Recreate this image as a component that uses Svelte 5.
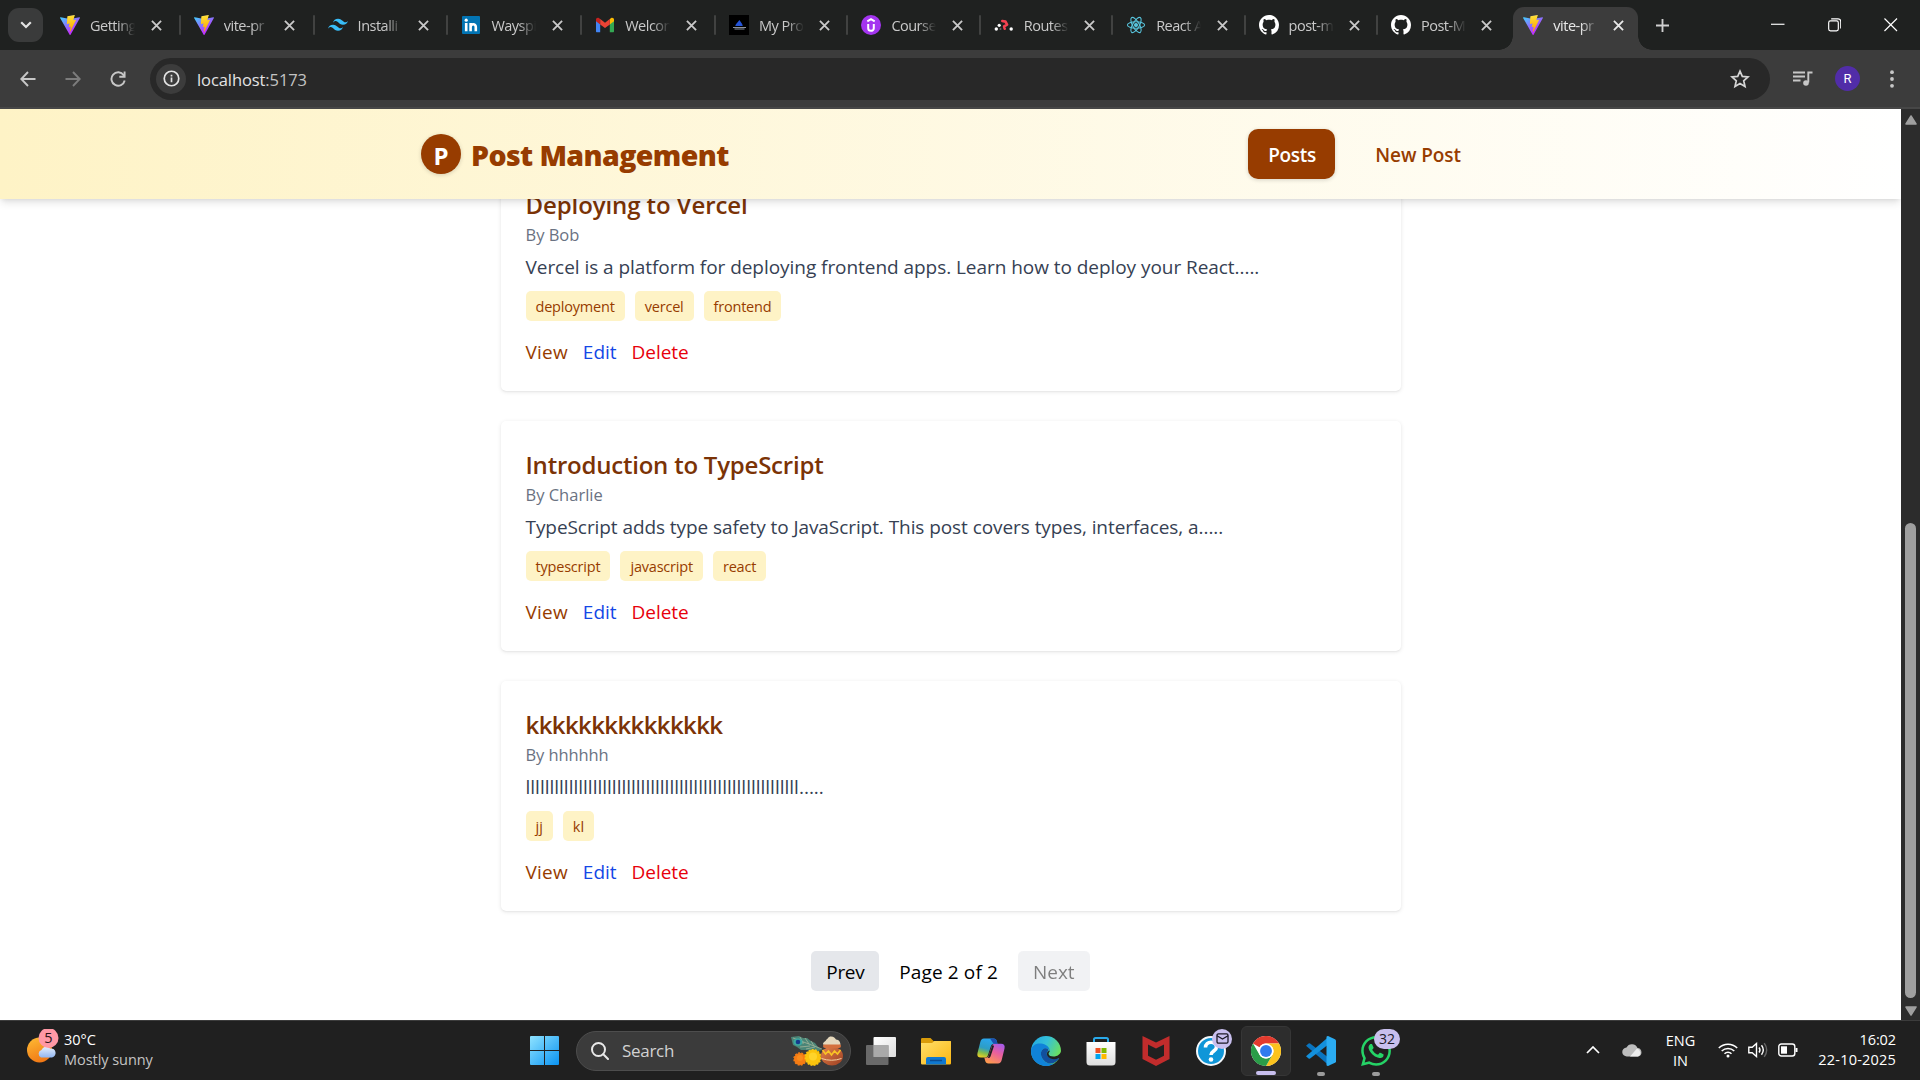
<script>
  const tabs = [
    { icon: 'vite', title: 'Getting' },
    { icon: 'vite', title: 'vite-pr' },
    { icon: 'tailwind', title: 'Installi' },
    { icon: 'linkedin', title: 'Wayspi' },
    { icon: 'gmail', title: 'Welcon' },
    { icon: 'drop', title: 'My Pro' },
    { icon: 'udemy', title: 'Course' },
    { icon: 'router', title: 'Routes' },
    { icon: 'react', title: 'React A' },
    { icon: 'github', title: 'post-m' },
    { icon: 'github', title: 'Post-M' },
    { icon: 'vite', title: 'vite-pr', active: true }
  ];

  const posts = [
    {
      title: 'Deploying to Vercel',
      author: 'Bob',
      body: 'Vercel is a platform for deploying frontend apps. Learn how to deploy your React',
      tags: ['deployment', 'vercel', 'frontend']
    },
    {
      title: 'Introduction to TypeScript',
      author: 'Charlie',
      body: 'TypeScript adds type safety to JavaScript. This post covers types, interfaces, a',
      tags: ['typescript', 'javascript', 'react']
    },
    { title: 'kkkkkkkkkkkkkkk', author: 'hhhhhh', body: 'l'.repeat(57), tags: ['jj', 'kl'] }
  ];

  const apps = ['taskview', 'explorer', 'copilot', 'edge', 'store', 'mcafee', 'help', 'chrome', 'vscode', 'whatsapp'];
</script>

{#snippet icon(name)}
  {#if name === 'vite'}
    <svg class="ic" viewBox="0 0 256 257">
      <path fill="url(#viteA)" d="M255.153 37.938 134.897 252.976c-2.483 4.44-8.862 4.466-11.382.048L.875 37.958c-2.746-4.814 1.371-10.646 6.827-9.67l120.385 21.517a6.537 6.537 0 0 0 2.322-.004l117.867-21.483c5.438-.991 9.574 4.796 6.877 9.62Z" />
      <path fill="url(#viteB)" d="M185.432.063 96.44 17.501a3.268 3.268 0 0 0-2.634 3.014l-5.474 92.456a3.268 3.268 0 0 0 3.997 3.378l24.777-5.718c2.318-.535 4.413 1.507 3.936 3.838l-7.361 36.047c-.495 2.426 1.782 4.5 4.151 3.78l15.304-4.649c2.372-.72 4.652 1.36 4.15 3.788l-11.698 56.621c-.732 3.542 3.979 5.473 5.943 2.437l1.313-2.028 72.516-144.72c1.215-2.423-.88-5.186-3.54-4.672l-25.505 4.922c-2.396.462-4.435-1.77-3.759-4.114l16.646-57.705c.677-2.35-1.37-4.583-3.769-4.113Z" />
    </svg>
  {:else if name === 'tailwind'}
    <svg class="ic" viewBox="0 -10 54 54">
      <path fill="#38bdf8" d="M27 0c-7.2 0-11.7 3.6-13.5 10.8 2.7-3.6 5.85-4.95 9.45-4.05 2.054.513 3.522 2.004 5.147 3.653C30.744 13.09 33.808 16.2 40.5 16.2c7.2 0 11.7-3.6 13.5-10.8-2.7 3.6-5.85 4.95-9.45 4.05-2.054-.513-3.522-2.004-5.147-3.653C36.756 3.11 33.692 0 27 0zM13.5 16.2C6.3 16.2 1.8 19.8 0 27c2.7-3.6 5.85-4.95 9.45-4.05 2.054.514 3.522 2.004 5.147 3.653C17.244 29.29 20.308 32.4 27 32.4c7.2 0 11.7-3.6 13.5-10.8-2.7 3.6-5.85 4.95-9.45 4.05-2.054-.513-3.522-2.004-5.147-3.653C23.256 19.31 20.192 16.2 13.5 16.2z" />
    </svg>
  {:else if name === 'linkedin'}
    <svg class="ic" viewBox="0 0 20 20">
      <rect x="1" y="1" width="18" height="18" rx="1" fill="#0274b3" />
      <circle cx="5.2" cy="5.2" r="1.6" fill="#fff" />
      <path d="M5.2 8v8.2M9.6 8v8.2M9.6 12c0-3.4 5.2-3.8 5.2 0v4.2" fill="none" stroke="#fff" stroke-width="2.6" />
    </svg>
  {:else if name === 'gmail'}
    <svg class="ic" viewBox="0 0 20 20">
      <path d="M1 5v11.2c0 .6.4 1 1 1h3.2V8.4z" fill="#4285f4" />
      <path d="M19 5v11.2c0 .6-.4 1-1 1h-3.2V8.4z" fill="#34a853" />
      <path d="M14.8 4.1v5.3L19 6.3V4.6c0-1.6-1.8-2.5-3.1-1.4z" fill="#fbbc04" />
      <path d="M1 4.6v1.7l4.2 3.1V4.1L4.1 3.2C2.8 2.1 1 3 1 4.6z" fill="#c5221f" />
      <path d="M5.2 4.1v5.3l4.8 3.6 4.8-3.6V4.1L10 7.7z" fill="#ea4335" />
    </svg>
  {:else if name === 'drop'}
    <svg class="ic" viewBox="0 0 20 20">
      <rect width="20" height="20" fill="#000" />
      <path d="M10.4 5c2 3 3.3 4 3.3 6H6.3c0-2 2-3 4.1-6z" fill="#2454d8" />
      <path d="M4 12.5h13M5.5 14h10" stroke="#8a919c" stroke-width="1" />
    </svg>
  {:else if name === 'udemy'}
    <svg class="ic" viewBox="0 0 20 20">
      <circle cx="10" cy="10" r="10" fill="#a435f0" />
      <path d="M6.3 6.3 10 4.2l3.7 2.1M7.2 9v4.2c0 3.4 5.6 3.4 5.6 0V9" fill="none" stroke="#fff" stroke-width="2" />
    </svg>
  {:else if name === 'router'}
    <svg class="ic" viewBox="0 0 20 20">
      <path d="M8.300 6l3.200.6 1.600 3-3 1.800.6 2.400" fill="none" stroke="#f44250" stroke-width="2.600" stroke-linecap="round" stroke-linejoin="round" />
      <g fill="#fff"><circle cx="5.2" cy="10.300" r="1.600" /><circle cx="2.3" cy="14" r="1.700" /><circle cx="17.2" cy="14" r="1.700" /></g>
      <circle cx="6.500" cy="14" r="1" fill="#fff" opacity="0.300" />
    </svg>
  {:else if name === 'react'}
    <svg class="ic" viewBox="0 0 20 20" fill="none" stroke="#58c4dc" stroke-width="1.1">
      <circle cx="10" cy="10" r="1.5" fill="#58c4dc" />
      <ellipse cx="10" cy="10" rx="8.6" ry="3.3" />
      <ellipse cx="10" cy="10" rx="8.6" ry="3.3" transform="rotate(60 10 10)" />
      <ellipse cx="10" cy="10" rx="8.6" ry="3.3" transform="rotate(120 10 10)" />
    </svg>
  {:else if name === 'github'}
    <svg class="ic" viewBox="0 0 16 16">
      <path fill="#fff" d="M8 0C3.58 0 0 3.58 0 8c0 3.54 2.29 6.53 5.47 7.59.4.07.55-.17.55-.38 0-.19-.01-.82-.01-1.49-2.01.37-2.53-.49-2.69-.94-.09-.23-.48-.94-.82-1.13-.28-.15-.68-.52-.01-.53.63-.01 1.08.58 1.23.82.72 1.21 1.87.87 2.33.66.07-.52.28-.87.51-1.07-1.78-.2-3.64-.89-3.64-3.95 0-.87.31-1.59.82-2.15-.08-.2-.36-1.02.08-2.12 0 0 .67-.21 2.2.82.64-.18 1.32-.27 2-.27s1.36.09 2 .27c1.53-1.04 2.2-.82 2.2-.82.44 1.1.16 1.92.08 2.12.51.56.82 1.27.82 2.15 0 3.07-1.87 3.75-3.65 3.95.29.25.54.73.54 1.48 0 1.07-.01 1.93-.01 2.2 0 .21.15.46.55.38A8.01 8.01 0 0 0 16 8c0-4.42-3.58-8-8-8z" />
    </svg>
  {/if}
{/snippet}

{#snippet app(name)}
  {#if name === 'taskview'}
    <svg viewBox="0 0 30 30" class="app">
      <rect x="7.5" y="1" width="22.5" height="20" rx="1" fill="url(#tvA)" />
      <rect x="0" y="9" width="22.5" height="20" rx="1" fill="#777" opacity=".85" />
      <rect x="7.5" y="9" width="15" height="12" fill="#a9a9a9" />
    </svg>
  {:else if name === 'explorer'}
    <svg viewBox="0 0 30 30" class="app">
      <path d="M0 3.2Q0 2 1.2 2h8.3l3 3H30v9H0z" fill="#d99b0a" />
      <path d="M0 7h11l2.5-2H29q1 0 1 1v21.2Q30 28.5 28.8 28.5H1.2Q0 28.5 0 27.2z" fill="url(#folder)" />
      <path d="M5 28.5V23q0-2 2-2h16q2 0 2 2v5.5z" fill="#0f78d0" />
      <path d="M9 24.5h12" stroke="#0b4c93" stroke-width="1.5" />
    </svg>
  {:else if name === 'copilot'}
    <svg viewBox="0 0 30 30" class="app">
      <path d="M8 2.5h9.500c2 0 2.800 1 3.300 2.800l.7 2.400h-3.200c-2 0-3 .9-3.600 3L12 19c-.6 2-1.500 2.600-3.400 2.600H5c-3 0-4.200-1.500-3.500-4.500L4.300 6c.6-2.300 1.600-3.500 3.700-3.500z" fill="url(#copA)" />
      <path d="M22 27.500h-9.500c-2 0-2.800-1-3.300-2.800l-.9-3.100c3 .2 4-.6 4.700-2.600L15.500 11c.7-2.300 1.500-3.300 3.600-3.300H25c3 0 4.200 1.800 3.500 4.800L25.700 24c-.6 2.300-1.600 3.500-3.700 3.500z" fill="url(#copB)" />
      <path d="M14 2.500h3.500c2 0 2.800 1 3.300 2.800l.7 2.400h-4z" fill="#1c4fb0" />
      <path d="M13.200 18.500 15.700 11q.4-1.300 1-2l1.300 1-3.500 10.500q-.8 2-3 1.500 1.200-1 1.700-3.500z" fill="#202020" />
    </svg>
  {:else if name === 'edge'}
    <svg viewBox="0 0 30 30" class="app">
      <circle cx="15" cy="15" r="15" fill="url(#edgeA)" />
      <path d="M0 15C.3 9.500 5 7 10 7.500c4.600.5 8.500 3.300 8.800 7-1.500-2.300-5-3-7.200-1-3.400 3-1.600 10.500 5 13.500 2.500 1.200 5 .8 7 .3A15 15 0 0 1 0 15z" fill="#1083d9" />
      <path d="M11.600 13.500c-3.400 3-1.600 10.500 5 13.500 4 1.700 8.800-.6 11.400-4.500.5-.8-.2-1.200-1-.8-4.500 2-9.500.3-11-2.700-.8-2 .2-3.400 1.600-4.500 0-2.500-4-3-6-1z" fill="#124f9e" />
      <path d="M18.800 14.500c.2 1.500-1.400 2-1.200 3.500.2 2 3.300 2.900 6.300 2.400 3.600-.6 6.100-3 6.100-5.400l1 4q-1 4-3.500 3c-4 2.500-9.500.5-11-2-1.500-2.300-.4-4.600 2.300-5.500z" fill="#202020" />
    </svg>
  {:else if name === 'store'}
    <svg viewBox="0 0 30 30" class="app">
      <path d="M8 6V3.500Q8 2 9.500 2h11Q22 2 22 3.500V6" fill="none" stroke="#29a9ea" stroke-width="2" />
      <path d="M.5 6h29v20q0 3.500-3.500 3.500H4Q.5 29.500.5 26z" fill="url(#storeA)" />
      <path d="M9.500 12h5v5h-5z" fill="#f25022" /><path d="M15.500 12h5v5h-5z" fill="#7fba00" />
      <path d="M9.500 18h5v5h-5z" fill="#00a4ef" /><path d="M15.500 18h5v5h-5z" fill="#ffb900" />
    </svg>
  {:else if name === 'mcafee'}
    <svg viewBox="0 0 30 30" class="app">
      <path d="M1.500 0 15 6.500 28.500 0v23L15 30 1.500 23z M7 8.500v11.200l8 4.100 8-4.100V8.500l-8 4z" fill="#c12c2c" fill-rule="evenodd" />
    </svg>
  {:else if name === 'help'}
    <svg viewBox="0 0 30 30" class="app">
      <circle cx="15" cy="15" r="14" fill="#0f96d8" stroke="#f4f8fb" stroke-width="2" />
      <path d="M9.500 11.500c0-7 11-7 11-.5 0 4-5.500 4-5.500 8" fill="none" stroke="#fff" stroke-width="3.600" />
      <circle cx="15" cy="23.500" r="2.300" fill="#fff" />
    </svg>
  {:else if name === 'chrome'}
    <svg viewBox="0 0 48 48" class="app">
      <circle cx="24" cy="24" r="24" fill="#fff" />
      <path d="M3.200 12A24 24 0 0 1 44.800 12H24a12 12 0 0 0-10.400 6z" fill="#e33b2e" />
      <path d="M44.800 12A24 24 0 0 1 24 48l10.400-18A12 12 0 0 0 34.400 18L24 12z" fill="#fcc31e" />
      <path d="M3.200 12A24 24 0 0 0 24 48l10.400-18A12 12 0 0 1 13.600 30z" fill="#2a9d48" />
      <circle cx="24" cy="24" r="12" fill="#fff" /><circle cx="24" cy="24" r="9.500" fill="#2f7bee" />
    </svg>
  {:else if name === 'vscode'}
    <svg viewBox="0 0 30 30" class="app">
      <path d="M0 9.800 2.600 7.500q.7-.5 1.500 0L23 22v7.500z" fill="#0a74bf" />
      <path d="M0 20.300l2.600 2.300q.7.500 1.500 0L23 8V.5z" fill="#1390dc" />
      <path d="M22 0l7 3.200q1 .5 1 1.500v20.600q0 1-1 1.500L22 30q-1.500 0-1.500-1V1q0-1 1.500-1z" fill="#2bacf2" />
    </svg>
  {:else if name === 'whatsapp'}
    <svg viewBox="0 0 24 24" class="app">
      <path fill="#25d366" d="M17.472 14.382c-.297-.149-1.758-.867-2.030-.967-.273-.099-.471-.148-.67.15-.197.297-.767.966-.94 1.164-.173.199-.347.223-.644.075-.297-.15-1.255-.463-2.390-1.475-.883-.788-1.480-1.761-1.653-2.059-.173-.297-.018-.458.13-.606.134-.133.298-.347.446-.52.149-.174.198-.298.298-.497.099-.198.05-.371-.025-.52-.075-.149-.669-1.612-.916-2.207-.242-.579-.487-.5-.669-.51-.173-.008-.371-.01-.57-.01-.198 0-.52.074-.792.372-.272.297-1.040 1.016-1.040 2.479 0 1.462 1.065 2.875 1.213 3.074.149.198 2.096 3.200 5.077 4.487.709.306 1.262.489 1.694.625.712.227 1.360.195 1.871.118.571-.085 1.758-.719 2.006-1.413.248-.694.248-1.289.173-1.413-.074-.124-.272-.198-.57-.347m-5.421 7.403h-.004a9.870 9.870 0 01-5.031-1.378l-.361-.214-3.741.982.998-3.648-.235-.374a9.860 9.860 0 01-1.510-5.260c.001-5.450 4.436-9.884 9.888-9.884 2.640 0 5.122 1.030 6.988 2.898a9.825 9.825 0 012.893 6.994c-.003 5.450-4.437 9.884-9.885 9.884m8.413-18.297A11.815 11.815 0 0012.050 0C5.495 0 .16 5.335.157 11.892c0 2.096.547 4.142 1.588 5.945L.057 24l6.305-1.654a11.882 11.882 0 005.683 1.448h.005c6.554 0 11.890-5.335 11.893-11.893a11.821 11.821 0 00-3.480-8.413z" />
    </svg>
  {/if}
{/snippet}

<svg class="defs" width="0" height="0">
  <defs>
    <linearGradient id="viteA" x1="0" y1="0" x2=".58" y2=".8"><stop offset="0" stop-color="#41d1ff" /><stop offset="1" stop-color="#bd34fe" /></linearGradient>
    <linearGradient id="viteB" x1=".43" y1="0" x2=".5" y2=".9"><stop offset="0" stop-color="#ffea83" /><stop offset=".1" stop-color="#ffdd35" /><stop offset="1" stop-color="#ffa800" /></linearGradient>
    <linearGradient id="tvA" x1="0" y1="0" x2="1" y2="1"><stop offset="0" stop-color="#fff" /><stop offset="1" stop-color="#ddd" /></linearGradient>
    <linearGradient id="folder" x1="0" y1="0" x2="1" y2="1"><stop offset="0" stop-color="#ffdf6a" /><stop offset="1" stop-color="#fbb713" /></linearGradient>
    <linearGradient id="copA" x1=".5" y1="0" x2=".2" y2="1"><stop offset="0" stop-color="#2aa6ef" /><stop offset=".5" stop-color="#2d9dc4" /><stop offset=".75" stop-color="#82bd4c" /><stop offset="1" stop-color="#f2cf22" /></linearGradient>
    <linearGradient id="copB" x1=".8" y1="0" x2=".3" y2="1"><stop offset="0" stop-color="#a65bea" /><stop offset=".45" stop-color="#e95f9e" /><stop offset="1" stop-color="#ff9a4e" /></linearGradient>
    <linearGradient id="edgeA" x1="0" y1="0" x2="1" y2=".5"><stop offset="0" stop-color="#1fa5e5" /><stop offset=".5" stop-color="#35c1d8" /><stop offset="1" stop-color="#6de05a" /></linearGradient>
    <linearGradient id="storeA" x1="0" y1="0" x2="0" y2="1"><stop offset="0" stop-color="#fff" /><stop offset="1" stop-color="#dedede" /></linearGradient>
    <linearGradient id="winA" x1="0" y1="0" x2="1" y2="1"><stop offset="0" stop-color="#8fe3ff" /><stop offset="1" stop-color="#0a93f2" /></linearGradient>
    <linearGradient id="sun" x1=".2" y1="0" x2=".6" y2="1"><stop offset="0" stop-color="#fdb833" /><stop offset="1" stop-color="#f07614" /></linearGradient>
    <linearGradient id="cloudA" x1="0" y1="0" x2="0" y2="1"><stop offset="0" stop-color="#e6effc" /><stop offset="1" stop-color="#92b6f0" /></linearGradient>
    <linearGradient id="pot" x1="0" y1="0" x2="1" y2="1"><stop offset="0" stop-color="#e5824a" /><stop offset="1" stop-color="#9c3f22" /></linearGradient>
  </defs>
</svg>

<div class="screen">
  <div class="tabstrip">
    <button class="tabsearch" aria-label="Search tabs">
      <svg width="12" height="8" viewBox="0 0 12 8"><path d="M1.200 1.200 6 6l4.800-4.800" fill="none" stroke="#e3e3e3" stroke-width="2.200" /></svg>
    </button>
    <div class="tabs">
      {#each tabs as tab, i}
        <div class="tab" class:wide={i < 5} class:active={tab.active} class:nosep={i >= 10}>
          {@render icon(tab.icon)}
          <span class="tabtitle">{tab.title}</span>
          <svg class="x" viewBox="0 0 12 12"><path d="M1 1l10 10M11 1 1 11" stroke="currentColor" stroke-width="2" /></svg>
        </div>
      {/each}
    </div>
    <svg class="plus" viewBox="0 0 14 14"><path d="M7 0v14M0 7h14" stroke="#d0d0d0" stroke-width="2" /></svg>
    <div class="winctl">
      <svg viewBox="0 0 14 14"><path d="M0 6.500h14" stroke="#fff" stroke-width="1.200" /></svg>
      <svg viewBox="0 0 14 14" fill="none" stroke="#fff" stroke-width="1.200"><rect x=".7" y="3" width="10" height="10.300" rx="1.800" /><path d="M3.300.9h7.200q2.700 0 2.700 2.700v7.400" /></svg>
      <svg viewBox="0 0 14 14"><path d="M.5.5l13 13M13.500.5l-13 13" stroke="#fff" stroke-width="1.200" /></svg>
    </div>
  </div>

  <div class="toolbar">
    <div class="nav">
      <svg viewBox="0 0 16 16" fill="none" stroke="#c7c7c7" stroke-width="1.900"><path d="M15.500 8H1.500M8 1 1.300 8 8 15" /></svg>
      <svg viewBox="0 0 16 16" fill="none" stroke="#7c7c7c" stroke-width="1.900"><path d="M.5 8h14M8 1l6.700 7L8 15" /></svg>
      <svg viewBox="0 0 16 16" fill="none" stroke="#c7c7c7" stroke-width="1.900"><path d="M13.700 4.200A6.700 6.700 0 1 0 14.700 9.500M14.600.5v5.300H9.300" /></svg>
    </div>
    <div class="omnibox">
      <span class="info"><svg viewBox="0 0 18 18" fill="none" stroke="#e3e3e3" stroke-width="1.800"><circle cx="9" cy="9" r="7.700" /><path d="M9 8v5M9 5v1.800" /></svg></span>
      <span class="url">localhost<span class="port">:5173</span></span>
      <svg class="star" viewBox="0 0 20 20" fill="none" stroke="#d5d5d5" stroke-width="1.700"><path d="M10 2.200l2.300 5.200 5.700.6-4.300 3.800 1.300 5.600-5-3-5 3 1.300-5.600L2 8l5.700-.6z" /></svg>
    </div>
    <svg class="queue" viewBox="0 0 20 16" fill="none" stroke="#c7c7c7" stroke-width="1.900"><path d="M0 1.500h12M0 5.500h12M0 9.500h7.500M15.300 11.500V1.500H19.500" /><circle cx="13" cy="12" r="2.800" fill="#c7c7c7" stroke="none" /></svg>
    <span class="avatar">R</span>
    <svg class="dots" viewBox="0 0 4 18" fill="#c7c7c7"><circle cx="2" cy="2.200" r="1.900" /><circle cx="2" cy="9" r="1.900" /><circle cx="2" cy="15.800" r="1.900" /></svg>
  </div>

  <div class="viewport">
    <div class="page">
      <header>
        <div class="brand"><span class="mark">P</span><span class="name">Post Management</span></div>
        <nav><a class="on" href="#posts">Posts</a><a href="#new">New Post</a></nav>
      </header>
      <main>
        {#each posts as post, i}
          <article class="post-{i + 1}">
            <h2>{post.title}</h2>
            <p class="by">By {post.author}</p>
            <p class="body">{post.body}.....</p>
            <div class="tags">{#each post.tags as t}<span>{t}</span>{/each}</div>
            <div class="links"><a class="view" href="#view">View</a><a class="edit" href="#edit">Edit</a><a class="delete" href="#delete">Delete</a></div>
          </article>
        {/each}
        <div class="pager"><button class="prev">Prev</button><span>Page 2 of 2</span><button disabled>Next</button></div>
      </main>
    </div>
    <div class="scrollbar">
      <svg viewBox="0 0 12 10"><path d="M6 1 11 9H1z" fill="#9f9f9f" stroke="#9f9f9f" stroke-width="1.500" stroke-linejoin="round" /></svg>
      <div class="thumb"></div>
      <svg viewBox="0 0 12 10"><path d="M6 9 11 1H1z" fill="#9f9f9f" stroke="#9f9f9f" stroke-width="1.500" stroke-linejoin="round" /></svg>
    </div>
  </div>

  <div class="taskbar">
    <div class="weather">
      <svg viewBox="0 0 32 34" width="32" height="34">
        <circle cx="12.500" cy="21" r="12.500" fill="url(#sun)" />
        <path d="M14 28.500a4 4 0 0 1 .5-7.500 5 5 0 0 1 8.500-1.500 4.500 4.500 0 0 1 2 9z" fill="url(#cloudA)" />
        <circle cx="21.500" cy="9" r="10" fill="#ff98a5" />
      </svg>
      <span class="wbadge">5</span>
      <div class="wtext"><span>30°C</span><span class="dim">Mostly sunny</span></div>
    </div>
    <svg class="start" viewBox="0 0 29 29"><path fill="url(#winA)" d="M1 0h13v14H0V1q0-1 1-1zM15 0h13q1 0 1 1v13H15zM0 15h14v14H1q-1 0-1-1zM15 15h14v13q0 1-1 1H15z" /></svg>
    <div class="search">
      <svg class="mag" viewBox="0 0 18 18" fill="none" stroke="#e8e8e8" stroke-width="2"><circle cx="7.500" cy="7.500" r="6.500" /><path d="M12.300 12.300 17 17" stroke-linecap="round" /></svg>
      <span>Search</span>
      <svg class="deco" viewBox="0 0 53 30">
        <path d="M0 1 8 0l4 2 4 0 4 3 4 2 3 4 4 3-4 1-5 0-6-1-6 0-4-3-4-2z" fill="#4b8577" />
        <path d="M2 2 31 13M9 1l3 6M14 2l4 6M20 5l3 5M4 7l9 0M9 11l10-1M15 13l9-2" stroke="#a3b59a" stroke-width=".8" fill="none" />
        <ellipse cx="7" cy="6" rx="4.500" ry="3.800" fill="#3aa7a0" /><circle cx="7" cy="6" r="2.300" fill="#143a8c" />
        <circle cx="9" cy="23" r="6" fill="#f57c14" stroke="#f57c14" stroke-width="1.500" stroke-dasharray="2 1.200" /><circle cx="9" cy="22" r="3" fill="#fb8c1c" />
        <circle cx="22" cy="21.500" r="7.800" fill="#fbc40d" stroke="#fbc40d" stroke-width="1.500" stroke-dasharray="2 1.200" /><circle cx="22" cy="20.500" r="4" fill="#ffd42a" />
        <ellipse cx="41" cy="20" rx="11" ry="9.500" fill="url(#pot)" />
        <rect x="32" y="8" width="18" height="4" rx="2" fill="#d5703d" />
        <path d="M31.500 14l3 4 3-3 3 4 3-4 3 3 3-4" fill="none" stroke="#f9c425" stroke-width="1.600" />
        <path d="M30.500 22.500q10 3.500 20 0" fill="none" stroke="#f3cfa2" stroke-width="1" />
        <path d="M32 8.500c0-3 3-3 3-4.500 2-1 2-3.500 5-3.500s4 1.500 5 3c3 0 4.500 3 4.500 5z" fill="#e6d8bd" />
      </svg>
    </div>
    <div class="apps">
      {#each apps as name}
        <div class="slot" class:current={name === 'chrome'} class:running={name === 'vscode' || name === 'whatsapp'}>
          {@render app(name)}
          {#if name === 'help'}<span class="badge mail"><svg viewBox="0 0 14 12" fill="none" stroke="#1c1a26" stroke-width="1.400"><rect x="1" y="1" width="12" height="10" rx="1.500" /><path d="M1 3l6 3.500L13 3" /></svg></span>{/if}
          {#if name === 'whatsapp'}<span class="badge count">32</span>{/if}
        </div>
      {/each}
    </div>
    <div class="tray">
      <svg class="chev" viewBox="0 0 14 8"><path d="M1 7l6-6 6 6" fill="none" stroke="#fff" stroke-width="1.700" /></svg>
      <svg class="cloud" viewBox="0 0 20 14"><path d="M5 13.500a4.500 4.500 0 0 1-.5-9A6 6 0 0 1 15.500 5a4.300 4.300 0 0 1 .5 8.500z" fill="#bdbdbd" /><path d="M8 13.500 15 5.500a4.300 4.300 0 0 1 1 8z" fill="#ededed" /></svg>
      <div class="lang"><span>ENG</span><span>IN</span></div>
      <svg class="wifi" viewBox="0 0 20 16" fill="none" stroke="#fff" stroke-width="1.500"><path d="M.8 6a13 13 0 0 1 18.400 0M3.700 9a9 9 0 0 1 12.600 0M6.500 11.800a5 5 0 0 1 7 0" /><circle cx="10" cy="14" r="1.500" fill="#fff" stroke="none" /></svg>
      <svg class="vol" viewBox="0 0 20 16" fill="none" stroke="#fff" stroke-width="1.400"><path d="M.8 5.300h3.400L8.500 1.500v13L4.200 10.700H.8z" /><path d="M11 5.500q2 2.500 0 5M13.500 3.300q3.600 4.700 0 9.400" /><path d="M16.200 1.200q5 6.800 0 13.600" stroke="#666" /></svg>
      <svg class="bat" viewBox="0 0 20 14" fill="none" stroke="#fff" stroke-width="1.400"><rect x=".8" y="1" width="16" height="12" rx="2.500" /><path d="M18.500 5v4" stroke-width="2" /><rect x="3" y="3.300" width="6" height="7.400" fill="#fff" stroke="none" /></svg>
      <div class="clock"><span>16:02</span><span class="date">22-10-2025</span></div>
    </div>
  </div>
</div>

<style>
  :global(body) { margin: 0; overflow: hidden; }
  .defs { position: absolute; }
  .screen {
    width: 1920px; height: 1080px; display: flex; flex-direction: column; overflow: hidden;
    font-family: 'Open Sans', 'Noto Sans', sans-serif; background: #fff;
  }
  .screen * { box-sizing: border-box; }
  svg { display: block; flex: none; }
  button { border: 0; font: inherit; padding: 0; }
  a { text-decoration: none; }

  .tabstrip { height: 50px; background: #1f2120; display: flex; align-items: center; padding-left: 8px; flex: none; }
  .tabsearch { width: 35px; height: 34px; border-radius: 11px; background: #3a3b3b; display: grid; place-items: center; }
  .tabs { display: flex; align-self: stretch; margin-left: 4px; }
  .tab {
    position: relative; width: 132.400px; display: flex; align-items: center; padding-left: 13px; color: #c9c9c9;
  }
  .tab.wide { width: 133.800px; }
  .tab:not(.nosep)::after { content: ''; margin-left: auto; width: 2px; height: 20px; background: #414241; border-radius: 1px; }
  .ic { width: 20px; height: 20px; }
  .tabtitle {
    width: 46px; margin-left: 10px; font-size: 14.500px; line-height: 22px; padding-top: 1px; letter-spacing: -0.5px; white-space: nowrap; overflow: hidden;
    mask-image: linear-gradient(90deg, #000 60%, transparent 98%);
  }
  .x { width: 11px; height: 11px; margin-left: 14.500px; }
  .tab.active { color: #e8e8e8; width: 125px; margin: 7px 0 0 3px; padding: 0 0 7px 10px; background: #3c3c3c; border-radius: 11px 11px 0 0; }
  .tab.active .x { margin-left: 13.500px; }
  .tab.active::before {
    content: ''; position: absolute; bottom: 0; left: -14px; right: -14px; height: 14px;
    background: radial-gradient(circle at 0 0, transparent 13.500px, #3c3c3c 14px) left / 14px 14px no-repeat,
      radial-gradient(circle at 100% 0, transparent 13.500px, #3c3c3c 14px) right / 14px 14px no-repeat;
  }
  .plus { width: 13px; height: 13px; margin-left: 18px; }
  .winctl { margin-left: auto; display: flex; gap: 43px; padding-right: 22.500px; }
  .winctl svg { width: 13.500px; height: 13.500px; }

  .toolbar {
    height: 59px; flex: none; display: flex; align-items: center; padding: 0 26px 0 20px; background: #3c3c3c;
    border-bottom: 2px solid #474747;
  }
  .nav { display: flex; gap: 29px; }
  .nav svg { width: 16px; height: 16px; }
  .omnibox { margin-left: 24px; width: 1620px; height: 42px; border-radius: 21px; background: #282828; display: flex; align-items: center; padding: 0 20px 0 6px; }
  .info { width: 30px; height: 30px; border-radius: 50%; background: #3c3c3c; display: grid; place-items: center; }
  .info svg { width: 17px; height: 17px; }
  .url { margin-left: 11px; font-size: 16.500px; letter-spacing: -0.09px; color: #e3e3e3; padding-top: 1px; }
  .port { color: #c3c3c3; }
  .star { width: 20px; height: 20px; margin-left: auto; }
  .queue { width: 20px; height: 16px; margin-left: 23px; }
  .avatar { width: 25px; height: 25px; border-radius: 50%; background: #512da8; color: #fff; font: 13px/25px Roboto, sans-serif; text-align: center; margin-left: 22px; }
  .dots { width: 4px; height: 18px; margin-left: auto; }

  .viewport { flex: 1; display: flex; min-height: 0; }
  .page { width: 1901px; display: flex; flex-direction: column; overflow: hidden; }
  header {
    height: 90px; flex: none; display: flex; align-items: center; justify-content: space-between; padding: 0 420px 0 421px; z-index: 1;
    background: linear-gradient(90deg, #fef3c6, #fff); box-shadow: 0 5px 8px -1px #0000001a, 0 2px 5px -2px #0000001a;
  }
  .brand { display: flex; align-items: center; gap: 10px; color: #973c00; }
  .mark { width: 40px; height: 40px; border-radius: 50%; background: #973c00; color: #fff; font-weight: 700; font-size: 24px; line-height: 43px; text-align: center; box-shadow: 0 1px 4px #0000002a; }
  .name { font-size: 28.500px; font-weight: 800; letter-spacing: -0.6px; white-space: nowrap; padding-top: 2px; }
  nav { display: flex; gap: 20px; }
  nav a { height: 50px; padding: 0 20px; line-height: 53px; font-size: 19px; font-weight: 600; color: #973c00; border-radius: 10px; letter-spacing: -0.06px; }
  nav a.on { width: 87px; background: #973c00; color: #fff; box-shadow: 0 1px 4px #0000002a; letter-spacing: -0.3px; }
  main { width: 900px; margin: -38px auto 0; }
  article {
    height: 230px; padding: 26px 25px 24px; margin-bottom: 30px; border-radius: 5px; background: #fff;
    box-shadow: 0 1px 4px #0000001a, 0 1px 2px -1px #0000001a;
  }
  h2, p { margin: 0; }
  h2 { font-size: 24px; line-height: 35px; font-weight: 600; color: #7b3306; letter-spacing: -0.1px; }
  .by { font-size: 16.500px; line-height: 25px; color: #6a7282; }
  .body { font-size: 19px; line-height: 30px; margin-top: 5px; color: #364153; white-space: nowrap; letter-spacing: -0.05px; }
  .post-2 h2 { letter-spacing: -0.22px; }
  .post-2 .body { letter-spacing: -0.07px; }
  .post-3 h2 { letter-spacing: -0.62px; }
  .post-3 .by { letter-spacing: -0.1px; }
  .post-3 .body { letter-spacing: 0; }
  .tags { display: flex; gap: 10px; margin-top: 9px; }
  .tags span { height: 30px; padding: 0 10px; line-height: 31px; font-size: 14.500px; letter-spacing: -0.2px; border-radius: 5px; background: #fef3c6; color: #973c00; }
  .post-3 .tags span { letter-spacing: 0; }
  .links { display: flex; gap: 15px; margin-top: 16px; font-size: 19px; line-height: 30px; }
  .view { color: #973c00; letter-spacing: 0.2px; } .edit { color: #1447e6; } .delete { color: #e7000b; letter-spacing: -0.06px; }
  .pager { display: flex; justify-content: center; align-items: center; gap: 20px; margin-top: 40px; font-size: 19px; line-height: 28px; color: #000; letter-spacing: 0.12px; }
  .pager span { padding-top: 2px; }
  .pager button { height: 40px; padding: 2px 15px 0; background: #e5e7eb; border-radius: 5px; color: #000; }
  .pager .prev { letter-spacing: -0.35px; }
  .pager button:disabled { opacity: 0.5; }
  .scrollbar { width: 19px; background: #2c2c2c; display: flex; flex-direction: column; align-items: center; padding: 6px 0 4px; }
  .scrollbar svg { width: 12px; height: 10px; }
  .thumb { width: 11px; height: 475px; margin-top: auto; margin-bottom: 8px; border-radius: 6px; background: #9f9f9f; }

  .taskbar { height: 60px; flex: none; background: #202020; border-top: 1px solid #3c3c3c; display: flex; align-items: center; color: #fff; font-size: 14.500px; }
  .weather { position: relative; display: flex; width: 530px; padding-left: 27px; }
  .weather svg { margin-top: -2px; }
  .wbadge { position: absolute; left: 38.500px; top: -3px; width: 20px; line-height: 20px; text-align: center; color: #2a1014; font-size: 14.500px; }
  .wtext { display: flex; flex-direction: column; margin: -1px 0 1px 5px; line-height: 20px; letter-spacing: -0.05px; }
  .dim { color: #c4c4c4; }
  .start { width: 29px; height: 29px; }
  .search { width: 275px; height: 40px; margin-left: 17px; border-radius: 20px; background: #3b3b3b; border: 1px solid #4d4d4d; display: flex; align-items: center; padding: 0 6px 0 14px; font-size: 17px; letter-spacing: -0.3px; color: #d2d2d2; }
  .search span { margin-top: -1px; }
  .mag { width: 18px; height: 18px; margin-right: 13px; }
  .deco { width: 53px; height: 30px; margin-left: auto; }
  .apps { display: flex; margin-left: 5px; align-self: stretch; align-items: center; }
  .slot { width: 50px; height: 50px; margin-right: 5px; position: relative; display: grid; place-items: center; border-radius: 6px; }
  .app { width: 30px; height: 30px; }
  .slot.current { background: #2d2d2d; border: 1px solid #363636; }
  .slot.current::after, .slot.running::after { content: ''; position: absolute; bottom: 0; height: 4px; border-radius: 2px; width: 20px; background: #c8bfee; }
  .slot.running::after { width: 8px; background: #9b9b9b; }
  .badge { position: absolute; top: 3px; height: 20px; border-radius: 10px; background: #c8bfee; color: #1c1a26; }
  .mail { left: 26px; width: 20px; display: grid; place-items: center; }
  .mail svg { width: 13px; height: 11px; }
  .count { left: 23px; width: 26px; text-align: center; font-size: 14px; line-height: 20px; }
  .tray { margin-left: auto; display: flex; align-items: center; padding-right: 24px; }
  .chev { width: 14px; height: 8px; margin: -1px 22.500px 0 0; }
  .cloud { width: 20px; height: 14px; margin-top: -2px; }
  .lang { display: flex; flex-direction: column; align-items: center; line-height: 20px; margin: 0 22.500px 0 23.500px; width: 30px; }
  .wifi { width: 20px; height: 16px; margin: -2px 10px 0 0; }
  .vol { width: 20px; height: 16px; margin: -2px 10px 0 0; }
  .bat { width: 20px; height: 14px; margin-top: -2px; }
  .clock { display: flex; flex-direction: column; align-items: flex-end; line-height: 20px; width: 98px; margin-top: -2px; letter-spacing: -0.1px; }
  .date { letter-spacing: 0.2px; }
</style>
